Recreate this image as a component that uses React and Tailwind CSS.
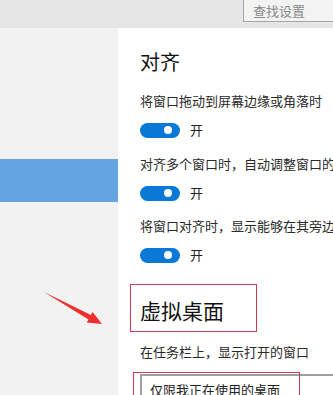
import React from "react";

const font = { fontFamily: '"Noto Sans CJK SC", "Noto Sans", sans-serif' };

const Toggle = ({ className }) => (
  <div className={"flex items-center h-[20px] " + className}>
    <div className="w-[40px] h-[15px] rounded-full bg-[#0a78d6] flex items-center justify-end pr-[8px]">
      <div className="w-[8px] h-[8px] rounded-full bg-white"></div>
    </div>
    <span className="ml-[10px] text-[13px] leading-[20px] text-[#222]">开</span>
  </div>
);

const App = () => {
  return (
    <div className="w-[333px] h-[395px] overflow-hidden bg-white flex flex-col" style={font}>
      <header className="h-[28px] shrink-0 bg-[#e6e6e6] flex">
        <div className="ml-[243px] flex-1 h-[22px] bg-[#f3f3f3] border-l border-b border-[#a6a6a6] flex items-center pl-[9px]">
          <span className="text-[13px] leading-[20px] text-[#8a8a8a]">查找设置</span>
        </div>
      </header>
      <div className="flex flex-1 relative">
        <aside className="w-[118px] shrink-0 bg-[#f2f2f2]">
          <div className="mt-[131px] h-[43px] bg-[#62a5e2]"></div>
        </aside>
        <main className="flex-1 pl-[22px] text-[#1a1a1a]">
          <h1 className="mt-[20px] text-[20px] leading-[28px] text-[#111]">对齐</h1>
          <p className="mt-[15px] text-[13px] leading-[20px] whitespace-nowrap text-[#2a2a2a]">将窗口拖动到屏幕边缘或角落时</p>
          <Toggle className="mt-[9px]" />
          <p className="mt-[14px] text-[13px] leading-[20px] whitespace-nowrap text-[#2a2a2a]">对齐多个窗口时，自动调整窗口的大小</p>
          <Toggle className="mt-[9px]" />
          <p className="mt-[13px] text-[13px] leading-[20px] whitespace-nowrap text-[#2a2a2a]">将窗口对齐时，显示能够在其旁边对齐的内容</p>
          <Toggle className="mt-[9px]" />
          <div className="mt-[19px] -ml-[10px] w-[127px] h-[48px] border border-[#d23a52] pl-[9px] pt-[10px]">
            <h2 className="text-[21px] leading-[30px] text-[#111]">虚拟桌面</h2>
          </div>
          <p className="mt-[10px] text-[13px] leading-[20px] whitespace-nowrap text-[#2a2a2a]">在任务栏上，显示打开的窗口</p>
          <div className="relative mt-[12px]">
            <div className="h-[32px] border-2 border-r-0 border-[#a0a0a0] flex items-center pl-[8px]">
              <span className="text-[13px] leading-[20px] text-[#222]">仅限我正在使用的桌面</span>
            </div>
            <div className="absolute -top-[2px] -left-[7px] w-[167px] h-[40px] border border-b-0 border-[#d23a52]"></div>
          </div>
        </main>
        <svg className="absolute left-0 top-0" width="118" height="367" viewBox="0 28 118 367">
          <polygon points="44,292 90.9,315 92.6,311.9 102,324 86.8,322.5 88.5,319.4" fill="#f02c2c" />
        </svg>
      </div>
    </div>
  );
};

export default App;
